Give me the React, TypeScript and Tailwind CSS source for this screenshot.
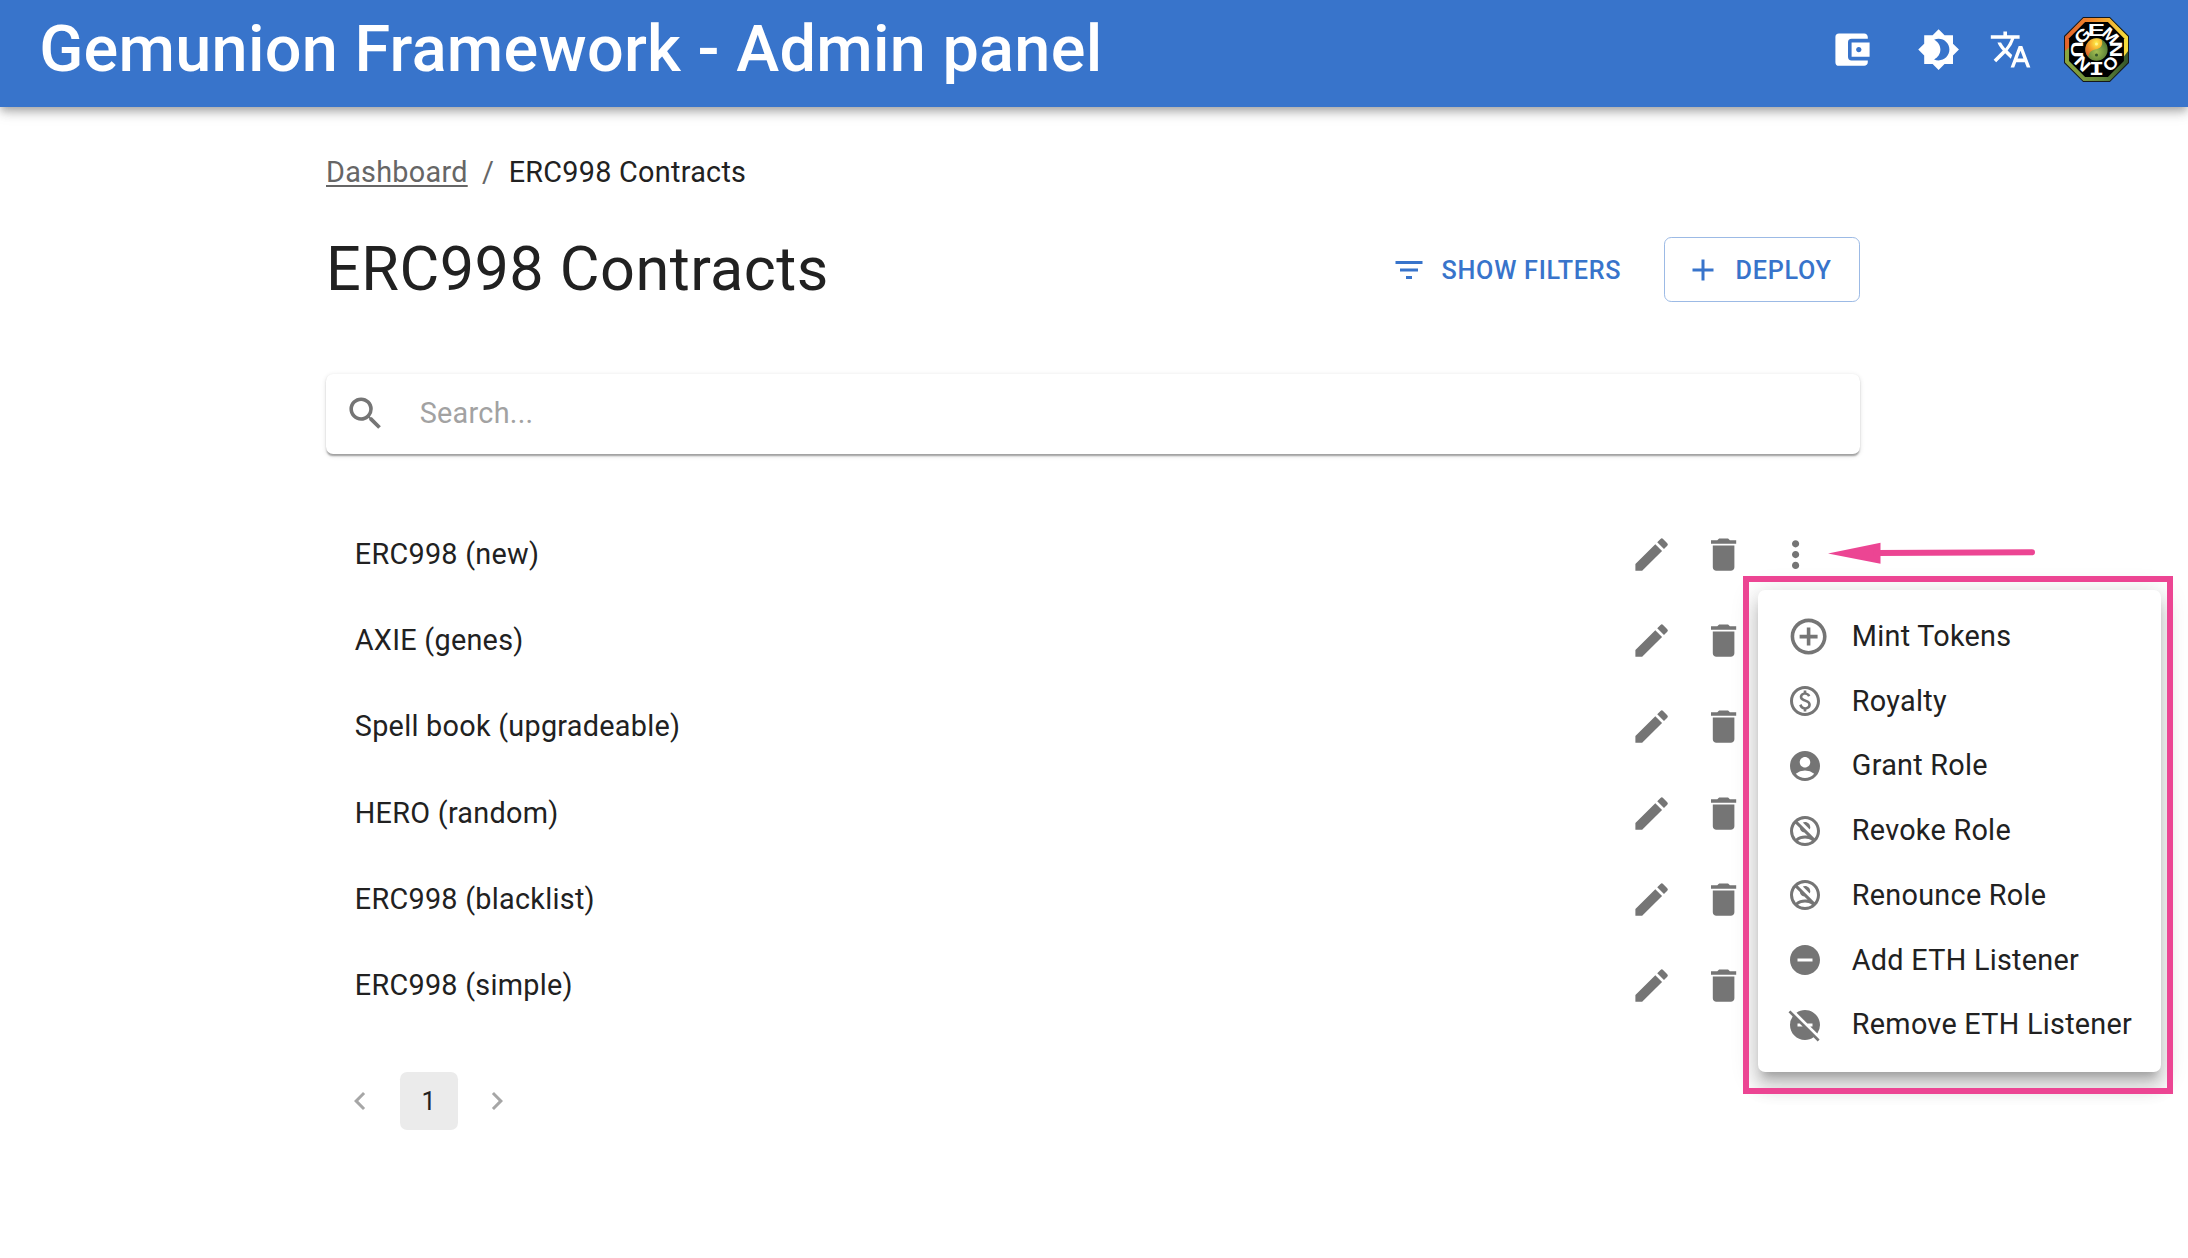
import type { ReactNode } from "react";
import {
  MdAccountBalanceWallet,
  MdAccountCircle,
  MdAdd,
  MdAddCircleOutline,
  MdBrightness4,
  MdCreate,
  MdDelete,
  MdDoNotDisturbOff,
  MdDoNotDisturbOn,
  MdFilterList,
  MdMoreVert,
  MdNavigateBefore,
  MdNavigateNext,
  MdOutlineNoAccounts,
  MdOutlinePaid,
  MdSearch,
  MdTranslate,
} from "react-icons/md";

const contracts = [
  "ERC998 (new)",
  "AXIE (genes)",
  "Spell book (upgradeable)",
  "HERO (random)",
  "ERC998 (blacklist)",
  "ERC998 (simple)",
];

const menuItems: { label: string; icon: ReactNode }[] = [
  { label: "Mint Tokens", icon: <MdAddCircleOutline className="size-[43.2px]" /> },
  { label: "Royalty", icon: <MdOutlinePaid className="size-9" /> },
  { label: "Grant Role", icon: <MdAccountCircle className="size-9" /> },
  { label: "Revoke Role", icon: <MdOutlineNoAccounts className="size-9" /> },
  { label: "Renounce Role", icon: <MdOutlineNoAccounts className="size-9" /> },
  { label: "Add ETH Listener", icon: <MdDoNotDisturbOn className="size-9" /> },
  { label: "Remove ETH Listener", icon: <MdDoNotDisturbOff className="size-9" /> },
];

const emblemLetters = [
  { char: "G", angle: -45, flip: 0, stretch: 1.15 },
  { char: "E", angle: 0, flip: 0, stretch: 1.5 },
  { char: "M", angle: 45, flip: 0, stretch: 1.1 },
  { char: "N", angle: 90, flip: 180, stretch: 1.3 },
  { char: "O", angle: 135, flip: 180, stretch: 1.05 },
  { char: "I", angle: 180, flip: 180, stretch: 1.5 },
  { char: "N", angle: 225, flip: 180, stretch: 1.2 },
  { char: "U", angle: 270, flip: 180, stretch: 1.3 },
];

function Emblem() {
  return (
    <svg viewBox="0 0 64 64" className="size-[65px]">
      <defs>
        <linearGradient id="rimTop" x1="0" y1="0" x2="1" y2="0">
          <stop offset="0" stopColor="#e2622c" />
          <stop offset="0.45" stopColor="#f08a2c" />
          <stop offset="1" stopColor="#f6e13c" />
        </linearGradient>
        <linearGradient id="rimBottom" x1="0" y1="0" x2="1" y2="0">
          <stop offset="0" stopColor="#8fa83f" />
          <stop offset="0.6" stopColor="#5f8438" />
          <stop offset="1" stopColor="#35562a" />
        </linearGradient>
        <radialGradient id="yang" cx="0.65" cy="0.25" r="0.8">
          <stop offset="0" stopColor="#fff04a" />
          <stop offset="0.5" stopColor="#f3a62b" />
          <stop offset="1" stopColor="#d9622a" />
        </radialGradient>
        <radialGradient id="yin" cx="0.5" cy="0.6" r="0.6">
          <stop offset="0" stopColor="#a3bf52" />
          <stop offset="1" stopColor="#4c7431" />
        </radialGradient>
      </defs>
      <path d="M19 .5H45L63.5 19V45L45 63.5H19L.5 45V19Z" fill="url(#rimBottom)" />
      <path d="M19 .5H45L63.5 19V33L58 40V30H5L.5 34V19Z" fill="url(#rimTop)" />
      <path d="M19 .5H45L63.5 19V45L45 63.5H19L.5 45V19Z" fill="none" stroke="#15181b" />
      <path d="M20.800 5H43.200L59 20.800V43.200L43.200 59H20.800L5 43.200V20.800Z" fill="#000" />
      {emblemLetters.map(({ char, angle, flip, stretch }) => (
        <g
          key={angle}
          transform={`rotate(${angle} 32 32) rotate(${flip} 32 12.6) translate(32 18.500) scale(${stretch} 1)`}
        >
          <text
            textAnchor="middle"
            fontSize="17"
            fontWeight="700"
            letterSpacing="0"
            fill="#fff"
            fontFamily={char === "I" ? "DejaVu Sans Mono, monospace" : "Liberation Sans, sans-serif"}
          >
            {char}
          </text>
        </g>
      ))}
      <circle cx="32" cy="32" r="11" fill="url(#yin)" />
      <path
        d="M32 21A11 11 0 0 0 24 39.500C24.500 34 28 32.500 32 31.800C37.500 30.800 39 25 36.500 22Q34.500 21 32 21Z"
        fill="url(#yang)"
      />
      <circle cx="32" cy="26.500" r="1.500" fill="#fff58a" />
      <circle cx="32" cy="37.500" r="1.500" fill="#35562a" />
    </svg>
  );
}

function Header() {
  return (
    <header className="flex h-[107px] items-start bg-[#3874cb] text-white shadow-[0_3.6px_7.2px_-1.8px_rgba(0,0,0,0.2),0_7.2px_9px_0_rgba(0,0,0,0.14),0_1.8px_18px_0_rgba(0,0,0,0.12)]">
      <div className="flex h-[98.4px] w-full items-center pl-[39.200px] pr-[59.500px]">
        <div className="flex-1 text-[64.8px] font-medium leading-none">Gemunion Framework - Admin panel</div>
        <MdAccountBalanceWallet className="mr-[43.600px] size-[43.2px]" />
        <MdBrightness4 className="mr-[28.8px] size-[43.2px]" />
        <MdTranslate className="mr-[31.600px] size-[43.2px]" />
        <Emblem />
      </div>
    </header>
  );
}

function ActionMenu() {
  return (
    <>
      <div className="absolute left-[1758px] top-[589.600px] h-[482.4px] w-[403px] rounded-[7.2px] bg-white py-[14.4px] shadow-[0_9px_9px_-5.4px_rgba(0,0,0,0.2),0_14.4px_18px_1.8px_rgba(0,0,0,0.14),0_5.4px_25.2px_3.6px_rgba(0,0,0,0.12)]">
        {menuItems.map(({ label, icon }) => (
          <div key={label} className="flex h-[64.750px] items-center pl-[28.8px]">
            <span className="w-[65px] shrink-0 text-[#757575]">{icon}</span>
            <span className="whitespace-nowrap">{label}</span>
          </div>
        ))}
      </div>
      <div className="absolute left-[1743px] top-[575.500px] h-[518px] w-[429.500px] border-6 border-[#ec4593]" />
      <svg className="absolute left-[1826px] top-[540px] h-[27px] w-[212px]" viewBox="0 0 212 27">
        <path d="M2 13.600L54.500 2.700V23.700Z" fill="#ec4593" />
        <path d="M50 13.100L206 12.200" stroke="#ec4593" strokeWidth="6" strokeLinecap="round" />
      </svg>
    </>
  );
}

export default function App() {
  return (
    <div className="relative h-[1258px] w-[2188px] overflow-hidden bg-white font-['Roboto',sans-serif] text-[28.8px] leading-none tracking-[0.00938em] text-[#212121]">
      <Header />
      <main className="ml-[326px] w-[1534px] pt-[45px]">
        <nav className="flex h-10 items-center text-[#666]">
          <a className="underline decoration-[#666] decoration-2 underline-offset-[3px]">Dashboard</a>
          <span className="mx-[14.4px]">/</span>
          <span className="text-[#212121]">ERC998 Contracts</span>
        </nav>

        <div className="mt-[45px] flex h-[65px] items-center justify-between text-[#3874cb]">
          <h1 className="text-[61.2px] leading-none tracking-[0.00735em] text-[#212121]">ERC998 Contracts</h1>
          <div className="flex items-center gap-[28.2px] text-[25.2px] font-medium tracking-[0.02857em]">
            <button className="flex h-[65px] items-center px-[14.4px]">
              <MdFilterList className="mr-[14.4px] size-9" />
              <span className="pt-[2px]">SHOW FILTERS</span>
            </button>
            <button className="flex h-[65px] items-center rounded-[7.2px] border border-[#9cbae5] pl-[20px] pr-[27.300px]">
              <MdAdd className="mr-[14.7px] size-9" />
              <span className="pt-[2px]">DEPLOY</span>
            </button>
          </div>
        </div>

        <div className="mt-[71.500px] flex h-[80px] items-center rounded-[7.2px] bg-white pl-[18px] shadow-[0_3.6px_1.8px_-1.8px_rgba(0,0,0,0.2),0_1.8px_1.8px_0_rgba(0,0,0,0.14),0_1.8px_5.4px_0_rgba(0,0,0,0.12)]">
          <MdSearch className="size-[43.2px] text-[#757575]" />
          <span className="ml-[32.500px] text-[#a2a2a2]">Search...</span>
        </div>

        <ul className="mt-[57.500px]">
          {contracts.map((name, index) => (
            <li key={name} className="flex h-[86.3px] items-center pl-[28.8px] pr-[43.300px]">
              <span className="flex-1">{name}</span>
              <span className="flex gap-[28.6px] pt-[0.5px] text-[#757575]">
                <MdCreate className="size-[43.2px]" />
                <MdDelete className="size-[43.2px]" />
                <MdMoreVert className={index === 0 ? "size-[43.2px]" : "invisible size-[43.2px]"} />
              </span>
            </li>
          ))}
        </ul>

        <div className="mt-[43.500px] flex items-center gap-[10.4px] pl-[5.4px] text-[25.2px]">
          <span className="flex size-[58px] items-center justify-center text-[#a6a6a6]">
            <MdNavigateBefore className="size-9" />
          </span>
          <span className="flex size-[58px] items-center justify-center rounded-[7.2px] bg-[#ebebeb]">1</span>
          <span className="flex size-[58px] items-center justify-center text-[#a6a6a6]">
            <MdNavigateNext className="size-9" />
          </span>
        </div>
      </main>
      <ActionMenu />
    </div>
  );
}
